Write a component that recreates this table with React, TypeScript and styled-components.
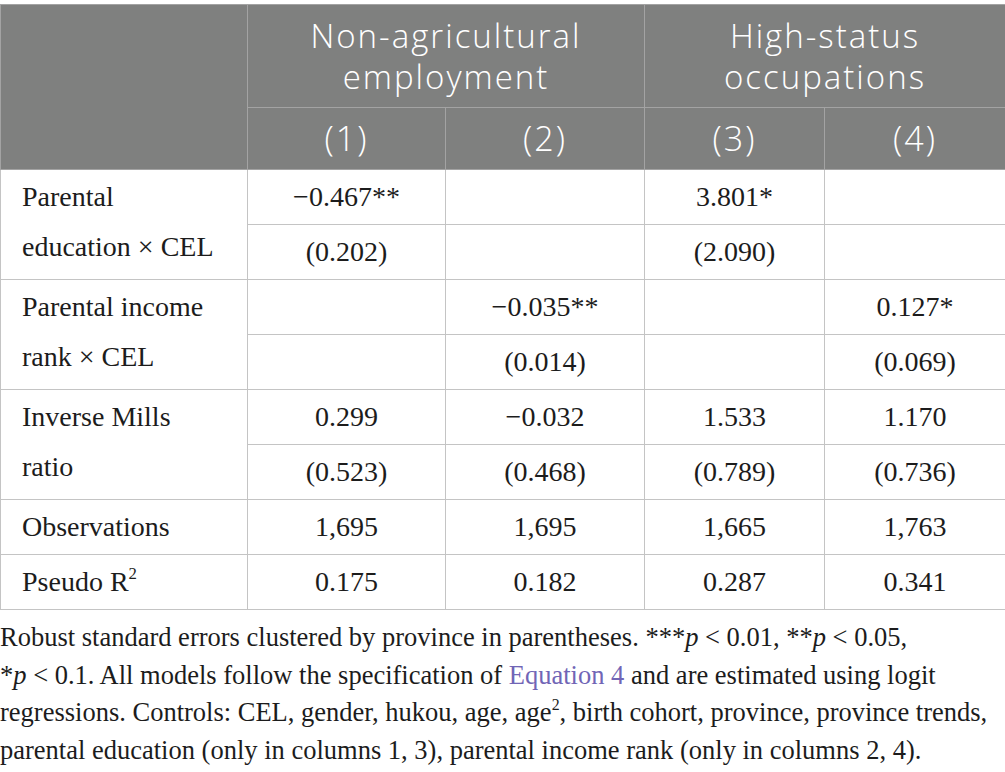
import React from 'react';
import styled, { createGlobalStyle } from 'styled-components';

const GlobalStyle = createGlobalStyle`
  html, body {
    margin: 0;
    padding: 0;
    background: #ffffff;
  }
`;

const Page = styled.div`
  width: 1005px;
  padding-top: 4px;
`;

const Table = styled.table`
  width: 1005px;
  table-layout: fixed;
  border-collapse: collapse;
  font-family: 'Liberation Serif', 'Times New Roman', serif;
  color: #1c1c1c;
`;

const Col = styled.col<{ $w: number }>`
  width: ${p => p.$w}px;
`;

const HeadCell = styled.th<{ $rowHeight: number; $size: number }>`
  background: #7f807f;
  color: #ffffff;
  font-family: 'Open Sans', Lato, sans-serif;
  font-weight: 350;
  font-size: ${p => p.$size}px;
  letter-spacing: 2px;
  line-height: 41px;
  text-align: center;
  vertical-align: middle;
  height: ${p => p.$rowHeight}px;
  padding: 0;
  border: 1px solid #a3a3a3;
`;

const LabelCell = styled.td`
  font-size: 28px;
  line-height: 50px;
  vertical-align: top;
  padding: 2px 0 0 21px;
  border: 1px solid #c4c4c4;
`;

const ValueCell = styled.td`
  font-size: 28px;
  line-height: 32px;
  text-align: center;
  vertical-align: middle;
  height: 54px;
  padding: 0;
  border: 1px solid #c4c4c4;
`;

const Sup = styled.sup`
  font-size: 0.6em;
  line-height: 0;
  vertical-align: 0.7em;
`;

const Note = styled.p`
  margin: 9px 0 0;
  font-family: 'Liberation Serif', 'Times New Roman', serif;
  font-size: 26.5px;
  line-height: 37.5px;
  color: #1c1c1c;
  white-space: nowrap;
`;

const Link = styled.span`
  color: #7165b6;
`;

type Cell = string | null;

interface Block {
  label: React.ReactNode;
  lines: Cell[][];
}

const blocks: Block[] = [
  {
    label: <>Parental<br />education × CEL</>,
    lines: [
      ['−0.467**', null, '3.801*', null],
      ['(0.202)', null, '(2.090)', null],
    ],
  },
  {
    label: <>Parental income<br />rank × CEL</>,
    lines: [
      [null, '−0.035**', null, '0.127*'],
      [null, '(0.014)', null, '(0.069)'],
    ],
  },
  {
    label: <>Inverse Mills<br />ratio</>,
    lines: [
      ['0.299', '−0.032', '1.533', '1.170'],
      ['(0.523)', '(0.468)', '(0.789)', '(0.736)'],
    ],
  },
  {
    label: 'Observations',
    lines: [['1,695', '1,695', '1,665', '1,763']],
  },
  {
    label: <>Pseudo R<Sup>2</Sup></>,
    lines: [['0.175', '0.182', '0.287', '0.341']],
  },
];

const widths = [247, 198, 199, 180, 181];

export default function App() {
  return (
    <Page>
      <GlobalStyle />
      <Table>
        <colgroup>
          {widths.map((w, i) => <Col key={i} $w={w} />)}
        </colgroup>
        <thead>
          <tr>
            <HeadCell $rowHeight={102} $size={33} rowSpan={2} />
            <HeadCell $rowHeight={102} $size={33} colSpan={2}>Non-agricultural<br />employment</HeadCell>
            <HeadCell $rowHeight={102} $size={33} colSpan={2}>High-status<br />occupations</HeadCell>
          </tr>
          <tr>
            {['(1)', '(2)', '(3)', '(4)'].map(h => (
              <HeadCell key={h} $rowHeight={61} $size={34}>{h}</HeadCell>
            ))}
          </tr>
        </thead>
        <tbody>
          {blocks.map((b, bi) =>
            b.lines.map((line, li) => (
              <tr key={`${bi}-${li}`}>
                {li === 0 && <LabelCell rowSpan={b.lines.length}>{b.label}</LabelCell>}
                {line.map((v, ci) => (
                  <ValueCell key={ci}>{v}</ValueCell>
                ))}
              </tr>
            ))
          )}
        </tbody>
      </Table>
      <Note>
        Robust standard errors clustered by province in parentheses. ***<i>p</i> &lt; 0.01, **<i>p</i> &lt; 0.05,
        <br />
        *<i>p</i> &lt; 0.1. All models follow the specification of <Link>Equation 4</Link> and are estimated using logit
        <br />
        regressions. Controls: CEL, gender, hukou, age, age<Sup>2</Sup>, birth cohort, province, province trends,
        <br />
        parental education (only in columns 1, 3), parental income rank (only in columns 2, 4).
      </Note>
    </Page>
  );
}
